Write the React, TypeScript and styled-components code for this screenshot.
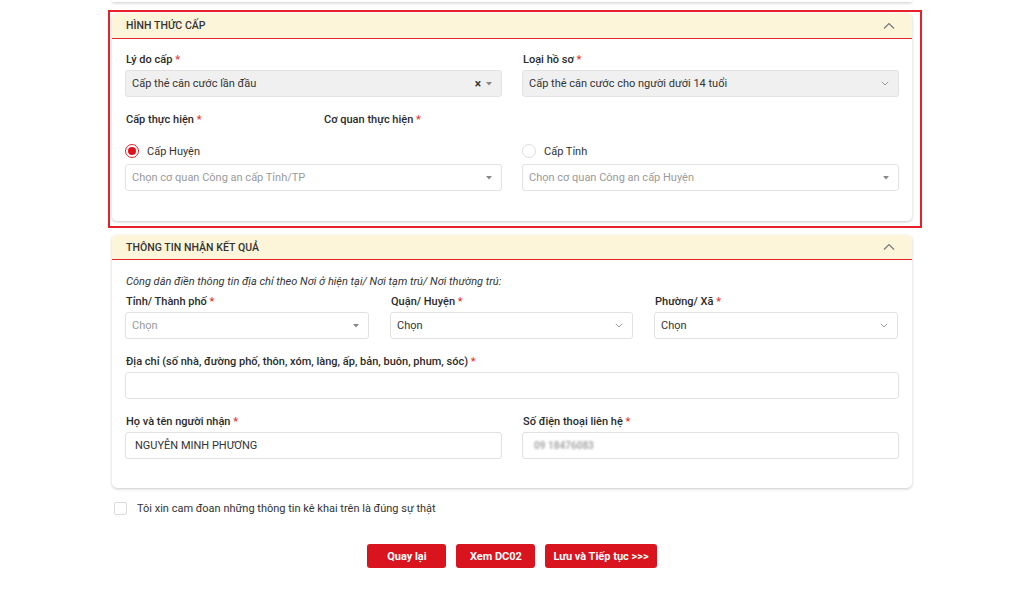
import { FC, ReactNode } from 'react'
import styled, { createGlobalStyle } from 'styled-components'

const GlobalStyle = createGlobalStyle`
  html, body {
    margin: 0;
    padding: 0;
    background: #ffffff;
    font-family: Roboto, 'Noto Sans', Arial, sans-serif;
    color: #333333;
  }
  * { box-sizing: border-box; }
`

type FieldProps = {
  label: string
  required?: boolean
  children: ReactNode
}

const Field: FC<FieldProps> = ({ label, required = true, children }) => (
  <FieldWrap>
    <Label>
      {label}
      {required && <Star> *</Star>}
    </Label>
    {children}
  </FieldWrap>
)

const ChevronUp = () => (
  <svg width="12" height="8" viewBox="0 0 12 8">
    <polyline points="1,6.5 6,1.5 11,6.5" fill="none" stroke="#777" strokeWidth="1.2" />
  </svg>
)

const ChevronDown = () => (
  <svg width="8" height="5" viewBox="0 0 8 5">
    <polyline points="0.8,0.8 4,4 7.2,0.8" fill="none" stroke="#999" strokeWidth="1" />
  </svg>
)

const Caret = () => (
  <svg width="6" height="4" viewBox="0 0 6 4">
    <polygon points="0,0 6,0 3,3.5" fill="#888" />
  </svg>
)

type SelectProps = {
  value: string
  placeholder?: boolean
  disabled?: boolean
  clear?: boolean
  arrow?: 'caret' | 'chevron'
}

const Select: FC<SelectProps> = ({ value, placeholder, disabled, clear, arrow = 'chevron' }) => (
  <SelectBox disabled={disabled}>
    <SelectText placeholder={placeholder}>{value}</SelectText>
    <SelectIcons>
      {clear && <ClearMark>×</ClearMark>}
      {arrow === 'caret' ? <Caret /> : <ChevronDown />}
    </SelectIcons>
  </SelectBox>
)

const Radio: FC<{ checked?: boolean; label: string }> = ({ checked, label }) => (
  <RadioRow>
    <RadioCircle checked={checked} />
    <RadioLabel>{label}</RadioLabel>
  </RadioRow>
)

export default function App() {
  return (
    <>
      <GlobalStyle />
      <Page>
        <PrevCard />

        <Highlighted>
          <Card>
            <CardHeader height={26}>
              <HeaderTitle>HÌNH THỨC CẤP</HeaderTitle>
              <ChevronUp />
            </CardHeader>
            <CardBody top={12} bottom={30}>
              <TwoCols>
                <Field label="Lý do cấp">
                  <Select value="Cấp thẻ căn cước lần đầu" disabled clear arrow="caret" />
                </Field>
                <Field label="Loại hồ sơ">
                  <Select value="Cấp thẻ căn cước cho người dưới 14 tuổi" disabled />
                </Field>
              </TwoCols>

              <LabelRow>
                <Label width={198}>
                  Cấp thực hiện<Star> *</Star>
                </Label>
                <Label>
                  Cơ quan thực hiện<Star> *</Star>
                </Label>
              </LabelRow>

              <TwoCols>
                <FieldWrap>
                  <Radio checked label="Cấp Huyện" />
                  <Select value="Chọn cơ quan Công an cấp Tỉnh/TP" placeholder arrow="caret" />
                </FieldWrap>
                <FieldWrap>
                  <Radio label="Cấp Tỉnh" />
                  <Select value="Chọn cơ quan Công an cấp Huyện" placeholder arrow="caret" />
                </FieldWrap>
              </TwoCols>
            </CardBody>
          </Card>
          <Frame />
        </Highlighted>

        <Card gap={14}>
          <CardHeader height={25}>
            <HeaderTitle>THÔNG TIN NHẬN KẾT QUẢ</HeaderTitle>
            <ChevronUp />
          </CardHeader>
          <CardBody top={13} bottom={29}>
            <Note>Công dân điền thông tin địa chỉ theo Nơi ở hiện tại/ Nơi tạm trú/ Nơi thường trú:</Note>
            <ThreeCols>
              <Field label="Tỉnh/ Thành phố">
                <Select value="Chọn" placeholder arrow="caret" />
              </Field>
              <Field label="Quận/ Huyện">
                <Select value="Chọn" />
              </Field>
              <Field label="Phường/ Xã">
                <Select value="Chọn" />
              </Field>
            </ThreeCols>

            <Spaced>
              <Field label="Địa chỉ (số nhà, đường phố, thôn, xóm, làng, ấp, bản, buôn, phum, sóc)">
                <Input />
              </Field>
            </Spaced>

            <Spaced>
              <TwoCols>
                <Field label="Họ và tên người nhận">
                  <Input>NGUYỄN MINH PHƯƠNG</Input>
                </Field>
                <Field label="Số điện thoại liên hệ">
                  <Input>
                    <Blurred>09 18476083</Blurred>
                  </Input>
                </Field>
              </TwoCols>
            </Spaced>
          </CardBody>
        </Card>

        <CheckRow>
          <CheckBox />
          <CheckText>Tôi xin cam đoan những thông tin kê khai trên là đúng sự thật</CheckText>
        </CheckRow>

        <Actions>
          <Button>Quay lại</Button>
          <Button>Xem DC02</Button>
          <Button>Lưu và Tiếp tục &gt;&gt;&gt;</Button>
        </Actions>
      </Page>
    </>
  )
}

const Page = styled.div`
  width: 800px;
  margin: 0 auto;
  padding-bottom: 40px;
`

const PrevCard = styled.div`
  height: 2px;
  background: #fff;
  border-radius: 0 0 5px 5px;
  box-shadow: 0 1px 3px rgba(0, 0, 0, 0.25);
`

const Highlighted = styled.div`
  position: relative;
  margin-top: 11px;
`

const Frame = styled.div`
  position: absolute;
  top: -3px;
  left: -4px;
  right: -10px;
  bottom: -7px;
  border: 2px solid #e8202b;
  pointer-events: none;
`

const Card = styled.div<{ gap?: number }>`
  background: #fff;
  border-radius: 5px;
  box-shadow: 0 1px 3px rgba(0, 0, 0, 0.22);
  margin-top: ${(p) => p.gap ?? 0}px;
  overflow: hidden;
`

const CardHeader = styled.div<{ height: number }>`
  height: ${(p) => p.height}px;
  background: #fdf5da;
  border-bottom: 1px solid #e3242b;
  display: flex;
  align-items: center;
  justify-content: space-between;
  padding: 0 17px 0 14px;
`

const HeaderTitle = styled.span`
  font-size: 10.5px;
  font-weight: 500;
  color: #333;
  letter-spacing: 0.05px;
`

const CardBody = styled.div<{ top: number; bottom: number }>`
  padding: ${(p) => `${p.top}px 13px ${p.bottom}px`};
`

const TwoCols = styled.div`
  display: grid;
  grid-template-columns: 1fr 1fr;
  column-gap: 20px;
`

const ThreeCols = styled.div`
  display: grid;
  grid-template-columns: 244px 243px 244px;
  column-gap: 21px;
  margin-top: 2px;
`

const FieldWrap = styled.div`
  display: flex;
  flex-direction: column;
`

const Label = styled.div<{ width?: number }>`
  font-size: 11px;
  line-height: 18px;
  font-weight: 500;
  color: #2b2b2b;
  margin-bottom: 1px;
  padding-left: 1px;
  ${(p) => (p.width ? `width: ${p.width}px;` : '')}
`

const Star = styled.span`
  color: #e53935;
`

const LabelRow = styled.div`
  display: flex;
  margin-top: 14px;
`

const SelectBox = styled.div<{ disabled?: boolean }>`
  height: 27px;
  display: flex;
  align-items: center;
  justify-content: space-between;
  padding: 0 6px;
  border: 1px solid #e2e2e2;
  border-radius: 3px;
  background: ${(p) => (p.disabled ? '#f0f0f0' : '#fff')};
`

const SelectText = styled.span<{ placeholder?: boolean }>`
  font-size: 11px;
  color: ${(p) => (p.placeholder ? '#9a9a9a' : '#333')};
  white-space: nowrap;
`

const SelectIcons = styled.span`
  display: flex;
  align-items: center;
  gap: 5px;
  padding-right: 3px;
`

const ClearMark = styled.span`
  font-size: 12px;
  font-weight: 700;
  color: #333;
  line-height: 1;
`

const RadioRow = styled.div`
  display: flex;
  align-items: center;
  gap: 8px;
  height: 18px;
  margin-top: 12px;
  margin-bottom: 4px;
`

const RadioCircle = styled.span<{ checked?: boolean }>`
  width: 14px;
  height: 14px;
  border-radius: 50%;
  border: 1px solid ${(p) => (p.checked ? '#e3242b' : '#dedede')};
  display: flex;
  align-items: center;
  justify-content: center;
  &::after {
    content: '';
    width: 8px;
    height: 8px;
    border-radius: 50%;
    background: ${(p) => (p.checked ? '#e0101c' : 'transparent')};
  }
`

const RadioLabel = styled.span`
  font-size: 11px;
  font-weight: 400;
  color: #333;
`

const Note = styled.div`
  font-size: 11px;
  line-height: 18px;
  font-style: italic;
  color: #333;
  padding-left: 1px;
`

const Spaced = styled.div`
  margin-top: 14px;
`

const Input = styled.div`
  height: 27px;
  display: flex;
  align-items: center;
  padding: 0 9px;
  border: 1px solid #e2e2e2;
  border-radius: 3px;
  background: #fff;
  font-size: 11px;
  color: #333;
`

const Blurred = styled.span`
  color: #a8a8a8;
  filter: blur(1.3px);
  font-size: 10px;
  font-weight: 700;
  padding-left: 2px;
`

const CheckRow = styled.div`
  display: flex;
  align-items: center;
  gap: 10px;
  margin-top: 14px;
  padding-left: 2px;
`

const CheckBox = styled.span`
  width: 13px;
  height: 13px;
  border: 1px solid #dcdcdc;
  border-radius: 2px;
  background: #fff;
`

const CheckText = styled.span`
  font-size: 11px;
  font-weight: 400;
  color: #333;
`

const Actions = styled.div`
  display: flex;
  justify-content: center;
  gap: 10px;
  margin-top: 29px;
`

const Button = styled.button`
  height: 24px;
  min-width: 79px;
  padding: 0 8px;
  border: none;
  border-radius: 3px;
  background: #d9141e;
  color: #fff;
  font-family: Roboto, Arial, sans-serif;
  font-size: 11px;
  font-weight: 700;
  cursor: pointer;
`
